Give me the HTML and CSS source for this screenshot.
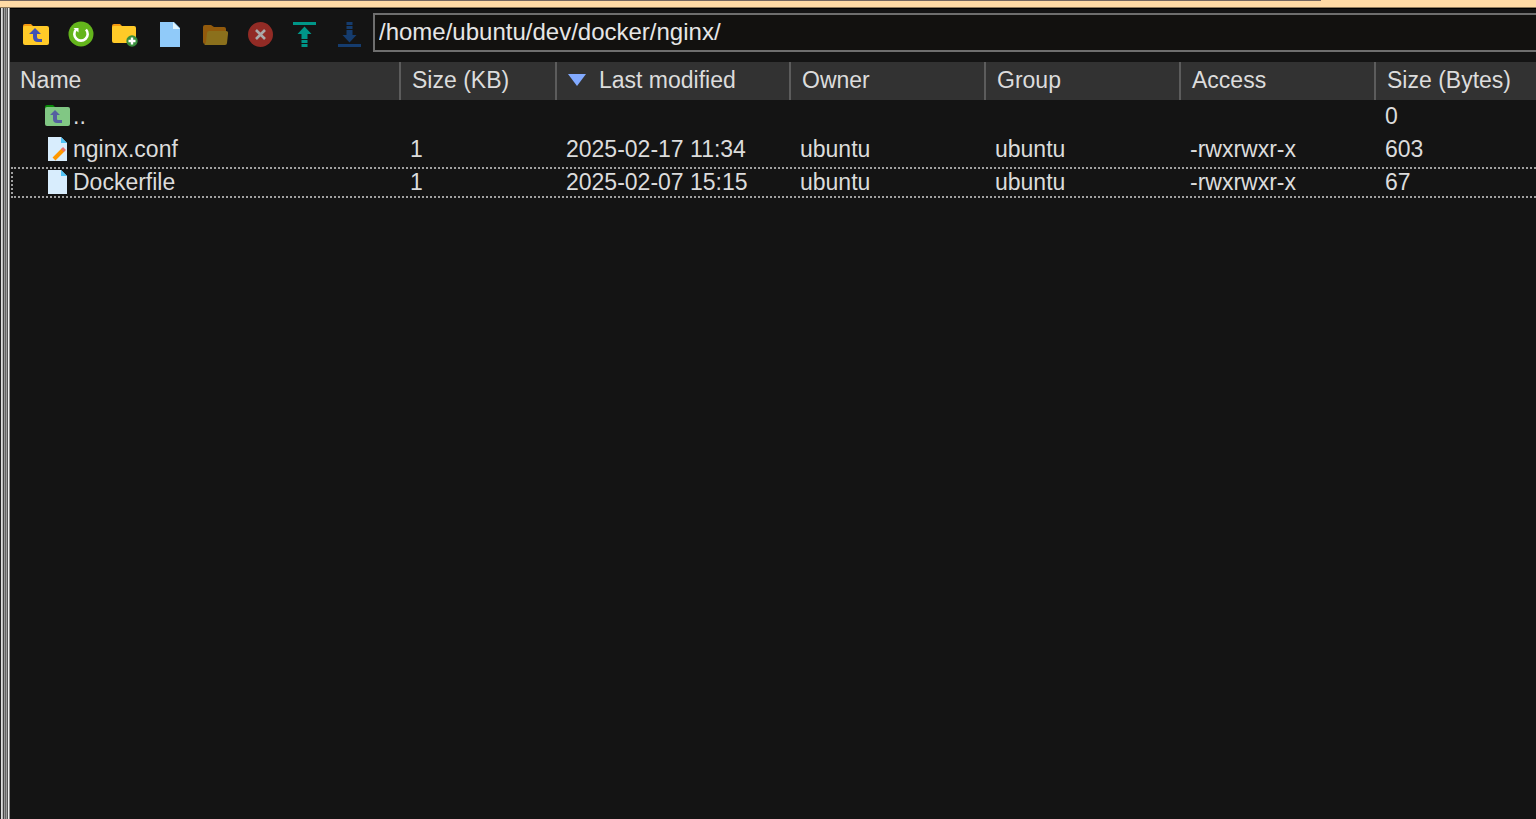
FILE: index.html
```html
<!DOCTYPE html>
<html lang="en">
<head>
    <meta charset="UTF-8">
    <meta name="viewport" content="width=device-width, initial-scale=1.0">
    <title>/home/ubuntu/dev/docker/nginx/</title>
    <link rel="stylesheet" href="styles.css">
</head>
<body>
    <div class="topbar"><div class="topline"></div></div>
    <div class="window">
        <!-- splitter -->
        <div class="splitter"></div>
        <main class="browser">
            <div class="toolbar">
                <button type="button" aria-label="Parent folder">
                    <svg viewBox="0 0 27 27">
                        <path fill="#f59a10" d="M1 5q0-2 2-2h6l3 3v6H1z"/>
                        <rect x="1" y="5" width="26" height="19" rx="2" fill="#ffca28"/>
                        <path fill="#3f51b5" d="M13 7l6 6h-4v3q0 2 2 2h3v3h-4q-5 0-5-5v-3H7z"/>
                    </svg>
                </button>
                <button type="button" aria-label="Refresh">
                    <svg viewBox="0 0 27 27">
                        <circle cx="14" cy="13" r="12.5" fill="#64b51c"/>
                        <path fill="none" stroke="#fff" stroke-width="2.6" d="M9 8.500A6.700 6.700 0 1 0 19 8.500"/>
                        <path fill="#fff" d="M6.500 7h5v4.500z"/>
                    </svg>
                </button>
                <button type="button" aria-label="New folder">
                    <svg viewBox="0 0 27 27">
                        <path fill="#f59a10" d="M0 5q0-2 2-2h6l3 3v6H0z"/>
                        <rect x="0" y="5" width="24" height="17" rx="2" fill="#ffca28"/>
                        <circle cx="20" cy="20" r="5.7" fill="#388e3c"/>
                        <path stroke="#fff" stroke-width="2.4" d="M20 16.500v7M16.500 20h7"/>
                    </svg>
                </button>
                <button type="button" aria-label="New file">
                    <svg viewBox="0 0 27 27">
                        <path fill="#90caf9" d="M3 1h14l6 6v19H3z"/>
                        <path fill="#e1f5fe" d="M16 1l7 7h-7z"/>
                    </svg>
                </button>
                <button type="button" aria-label="Open">
                    <svg viewBox="0 0 27 27">
                        <path fill="#925a0c" d="M1 6q0-2 2-2h6l3 2h10q2 0 2 2v15H3q-2 0-2-2z"/>
                        <path fill="#8b701c" d="M7 10h17q2.500 0 2 3l-1 9q0 2-2 2H2q1 0 2-3l1-9q0-2 2-2z"/>
                    </svg>
                </button>
                <button type="button" aria-label="Delete">
                    <svg viewBox="0 0 27 27">
                        <circle cx="13.500" cy="13.500" r="12.500" fill="#922b25"/>
                        <path stroke="#aaa" stroke-width="2.600" d="M9 9l9 9M18 9l-9 9"/>
                    </svg>
                </button>
                <button type="button" aria-label="Upload">
                    <svg viewBox="0 0 27 27">
                        <path fill="#009688" d="M1 1h23v3H1zM12.500 5.500l7 7.500h-4v5h-6v-5h-4zM9.500 19h6v3h-6zM9.500 23h6v3h-6z"/>
                    </svg>
                </button>
                <button type="button" aria-label="Download">
                    <svg viewBox="0 0 27 27">
                        <path fill="#153c6e" d="M1 23h23v3H1zM12.500 21.500l7-7.500h-4V9h-6v5h-4zM9.500 5h6v3h-6zM9.500 1h6v3h-6z"/>
                    </svg>
                </button>
                <input class="path" type="text" aria-label="Path" value="/home/ubuntu/dev/docker/nginx/">
            </div>
            <table class="files">
                <colgroup>
                    <col class="c-name">
                    <col class="c-size">
                    <col class="c-date">
                    <col class="c-owner">
                    <col class="c-owner">
                    <col class="c-owner">
                    <col>
                </colgroup>
                <thead>
                    <tr>
                        <th>Name</th>
                        <th>Size (KB)</th>
                        <th><span class="sort"></span>Last modified</th>
                        <th>Owner</th>
                        <th>Group</th>
                        <th>Access</th>
                        <th>Size (Bytes)</th>
                    </tr>
                </thead>
                <tbody>
                    <tr>
                        <td>
                            <div class="name">
                                <svg viewBox="0 0 27 27">
                                    <path fill="#088a08" d="M1 6V4q0-2 2-2h6l3 3v3H1z"/>
                                    <rect x="1" y="4" width="25" height="19" rx="2" fill="#81c784"/>
                                    <path fill="#5560a0" d="M11 7l5 5h-3v4q0 1 1 1h4v3h-5q-4 0-4-4v-4H6z"/>
                                </svg>
                                <span>..</span>
                            </div>
                        </td>
                        <td></td>
                        <td></td>
                        <td></td>
                        <td></td>
                        <td></td>
                        <td>0</td>
                    </tr>
                    <tr>
                        <td>
                            <div class="name">
                                <svg viewBox="0 0 27 27">
                                    <path fill="#d8edfd" d="M4 1h13l6 6v18H4z"/>
                                    <path fill="#4fc3f7" d="M17 1l6 6h-6z"/>
                                    <path stroke="#ff9800" stroke-width="4" d="M10 23l9-9"/>
                                    <path stroke="#e57373" stroke-width="4" d="M18.500 14.500l2-2"/>
                                </svg>
                                <span>nginx.conf</span>
                            </div>
                        </td>
                        <td>1</td>
                        <td>2025-02-17 11:34</td>
                        <td>ubuntu</td>
                        <td>ubuntu</td>
                        <td>-rwxrwxr-x</td>
                        <td>603</td>
                    </tr>
                    <tr class="focused">
                        <td>
                            <div class="name">
                                <svg viewBox="0 0 27 27">
                                    <path fill="#d8edfd" d="M4 1h13l6 6v18H4z"/>
                                    <path fill="#4fc3f7" d="M17 1l6 6h-6z"/>
                                </svg>
                                <span>Dockerfile</span>
                            </div>
                        </td>
                        <td>1</td>
                        <td>2025-02-07 15:15</td>
                        <td>ubuntu</td>
                        <td>ubuntu</td>
                        <td>-rwxrwxr-x</td>
                        <td>67</td>
                    </tr>
                </tbody>
            </table>
        </main>
    </div>
</body>
</html>
```
FILE: styles.css
```css
*{
    margin: 0;
    padding: 0;
    box-sizing: border-box;
}
body{
    display: flex;
    flex-direction: column;
    min-height: 100vh;
    background: #141414;
    color: #dcdcdc;
    font-family: "Liberation Sans", Arial, sans-serif;
    font-size: 23px;
    overflow-x: hidden;
}
.topbar{
    height: 8px;
    background: #ffdaa5;
    border-bottom: 1px solid #8f7a5c;
}
.topline{
    width: 86%;
    height: 1px;
    background: #75665f;
}
.window{
    display: flex;
    flex: 1;
}
/* vertical stripes of the splitter */
.splitter{
    width: 10px;
    background: linear-gradient(to right,
        #222 1px, #ddd 1px 2px, #bbb 2px 3px, #444 3px 4px, #999 4px 5px,
        #666 5px 6px, #999 6px 7px, #555 7px 8px, #eee 8px 9px, #888 9px);
}
.browser{
    flex: 1;
    min-width: 0;
    border-top: 1px solid #000;
}
.toolbar{
    display: flex;
    align-items: flex-start;
    padding: 4px 0 6px 3px;
}
.toolbar button{
    display: flex;
    align-items: center;
    justify-content: center;
    flex: none;
    width: 45px;
    height: 43px;
    border: none;
    background: none;
}
svg{
    display: block;
    flex: none;
    width: 27px;
    height: 27px;
}
.path{
    flex: 1;
    min-width: 0;
    height: 39px;
    padding: 0 4px 2px;
    border: 2px solid #6e6e6e;
    border-right: none;
    background: #12110f;
    color: #e6e6e6;
    font-family: inherit;
    font-size: 24px;
    outline: none;
}
/* the last column runs past the window edge */
.files{
    width: calc(100% + 4px);
    table-layout: fixed;
    border-collapse: separate;
    border-spacing: 0;
}
.c-name{
    width: 391px;
}
.c-size{
    width: 156px;
}
.c-date{
    width: 234px;
}
.c-owner{
    width: 195px;
}
.files th{
    height: 38px;
    padding: 0 0 2px 11px;
    border-right: 2px solid #5c5c5c;
    background: #323232;
    font-weight: normal;
    text-align: left;
    white-space: nowrap;
}
.files th:first-child{
    padding-left: 10px;
}
.files th:last-child{
    border-right: none;
}
.sort{
    display: inline-block;
    margin-right: 13px;
    border: 9px solid transparent;
    border-top: 12px solid #82aaff;
    border-bottom: none;
    vertical-align: 2px;
}
.files td{
    height: 33px;
    padding-left: 9px;
    white-space: nowrap;
}
.name{
    display: flex;
    align-items: center;
    gap: 2px;
    padding-left: 25px;
}
.focused{
    outline: 2px dotted #a0a0a0;
    outline-offset: -3px;
}
```
